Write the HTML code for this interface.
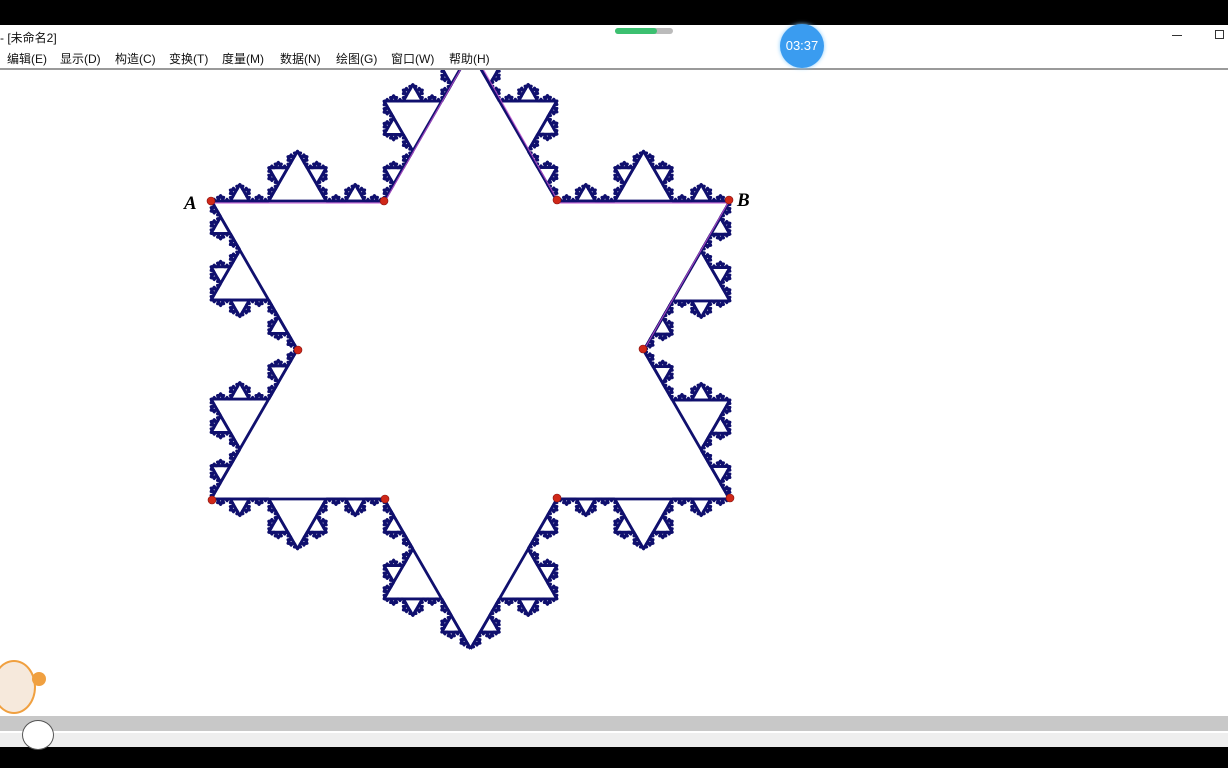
<!DOCTYPE html>
<html><head><meta charset="utf-8"><style>
html,body{margin:0;padding:0;width:1228px;height:768px;overflow:hidden;background:#fff;font-family:"Liberation Sans","Noto Sans CJK SC",sans-serif;}
.blk{position:absolute;left:0;width:1228px;background:#000;}
.t{position:absolute;font-size:12px;color:#111;white-space:nowrap;}
</style></head><body>
<div class="blk" style="top:0;height:25px"></div>
<div class="blk" style="top:747px;height:21px"></div>
<svg width="1228" height="768" style="position:absolute;left:0;top:0">
<defs>
<g id="L0"><path d="M0 0H1" vector-effect="non-scaling-stroke"/></g>
<g id="L1"><path d="M0 0H1M.3333 0L.5 -.2887L.6667 0" vector-effect="non-scaling-stroke"/>
<use href="#L0" transform="scale(.3333)"/><use href="#L0" transform="translate(.6667,0) scale(.3333)"/>
<use href="#L0" transform="translate(.3333,0) rotate(-60) scale(.3333)"/><use href="#L0" transform="translate(.5,-.2887) rotate(60) scale(.3333)"/></g>
<g id="L2"><path d="M0 0H1M.3333 0L.5 -.2887L.6667 0" vector-effect="non-scaling-stroke"/>
<use href="#L1" transform="scale(.3333)"/><use href="#L1" transform="translate(.6667,0) scale(.3333)"/>
<use href="#L1" transform="translate(.3333,0) rotate(-60) scale(.3333)"/><use href="#L1" transform="translate(.5,-.2887) rotate(60) scale(.3333)"/></g>
<g id="L3"><path d="M0 0H1M.3333 0L.5 -.2887L.6667 0" vector-effect="non-scaling-stroke"/>
<use href="#L2" transform="scale(.3333)"/><use href="#L2" transform="translate(.6667,0) scale(.3333)"/>
<use href="#L2" transform="translate(.3333,0) rotate(-60) scale(.3333)"/><use href="#L2" transform="translate(.5,-.2887) rotate(60) scale(.3333)"/></g>
<g id="L4"><path d="M0 0H1M.3333 0L.5 -.2887L.6667 0" vector-effect="non-scaling-stroke"/>
<use href="#L3" transform="scale(.3333)"/><use href="#L3" transform="translate(.6667,0) scale(.3333)"/>
<use href="#L3" transform="translate(.3333,0) rotate(-60) scale(.3333)"/><use href="#L3" transform="translate(.5,-.2887) rotate(60) scale(.3333)"/></g>
</defs>
<g stroke="#10106e" stroke-width="2.8" fill="none" stroke-linejoin="round">
<use href="#L4" transform="translate(211,201) rotate(0) scale(173)"/>
<use href="#L4" transform="translate(384,201) rotate(-60) scale(173)"/>
<use href="#L4" transform="translate(470.5,51) rotate(60) scale(173)"/>
<use href="#L4" transform="translate(557,201) rotate(0) scale(173)"/>
<use href="#L4" transform="translate(730,201) rotate(120) scale(173)"/>
<use href="#L4" transform="translate(643.5,350) rotate(60) scale(173)"/>
<use href="#L4" transform="translate(730,499) rotate(180) scale(173)"/>
<use href="#L4" transform="translate(557,499) rotate(120) scale(173)"/>
<use href="#L4" transform="translate(470.5,648.8) rotate(240) scale(173)"/>
<use href="#L4" transform="translate(384,499) rotate(180) scale(173)"/>
<use href="#L4" transform="translate(211,499) rotate(-60) scale(173)"/>
<use href="#L4" transform="translate(297.5,350) rotate(240) scale(173)"/>
</g>
<g stroke="#c050d0" stroke-width="1.2" fill="none" opacity=".8">
<path d="M213 203H384L470 53M474 53L559 203H728L645 348"/>
</g>
<g fill="#d02818" stroke="#801010" stroke-width=".6">
<circle cx="211" cy="201" r="4"/><circle cx="384" cy="201" r="4"/><circle cx="557" cy="200" r="4"/><circle cx="729" cy="200" r="4"/>
<circle cx="643" cy="349" r="4"/><circle cx="298" cy="350" r="4"/><circle cx="212" cy="500" r="4"/><circle cx="385" cy="499" r="4"/>
<circle cx="557" cy="498" r="4"/><circle cx="730" cy="498" r="4"/>
</g>
<text x="184" y="209" font-family="Liberation Serif" font-style="italic" font-weight="bold" font-size="19">A</text>
<text x="737" y="206" font-family="Liberation Serif" font-style="italic" font-weight="bold" font-size="19">B</text>
</svg>
<div style="position:absolute;left:0;top:25px;width:1228px;height:43px;background:#fff;border-bottom:2px solid #9a9a9a"></div>
<div class="t" style="left:0;top:29px">- [未命名2]</div>
<div class="t" style="left:7px;top:50px">编辑(E)</div>
<div class="t" style="left:60px;top:50px">显示(D)</div>
<div class="t" style="left:115px;top:50px">构造(C)</div>
<div class="t" style="left:169px;top:50px">变换(T)</div>
<div class="t" style="left:222px;top:50px">度量(M)</div>
<div class="t" style="left:280px;top:50px">数据(N)</div>
<div class="t" style="left:336px;top:50px">绘图(G)</div>
<div class="t" style="left:391px;top:50px">窗口(W)</div>
<div class="t" style="left:449px;top:50px">帮助(H)</div>
<div style="position:absolute;left:615px;top:28px;width:58px;height:6px;border-radius:3px;background:#bbb"><div style="width:42px;height:6px;border-radius:3px;background:#3cc070"></div></div>
<div style="position:absolute;left:780px;top:24px;width:44px;height:44px;border-radius:50%;background:#3a9cf0;color:#fff;font-size:13px;line-height:44px;text-align:center;box-shadow:0 0 4px #8cf">03:37</div>
<div style="position:absolute;left:1172px;top:35px;width:10px;height:1px;background:#333"></div>
<div style="position:absolute;left:1215px;top:30px;width:7px;height:7px;border:1px solid #333"></div>
<div style="position:absolute;left:0;top:716px;width:1228px;height:15px;background:#c8c8c8"></div>
<div style="position:absolute;left:0;top:733px;width:1228px;height:14px;background:#eeeeee"></div>
<div style="position:absolute;left:-8px;top:660px;width:40px;height:50px;border-radius:50%;background:#f6e9dc;border:2px solid #f0a040"></div>
<div style="position:absolute;left:32px;top:672px;width:14px;height:14px;border-radius:50%;background:#f0a040"></div>
<div style="position:absolute;left:22px;top:720px;width:30px;height:28px;border-radius:50%;background:#fff;border:1px solid #555"></div>
</body></html>
